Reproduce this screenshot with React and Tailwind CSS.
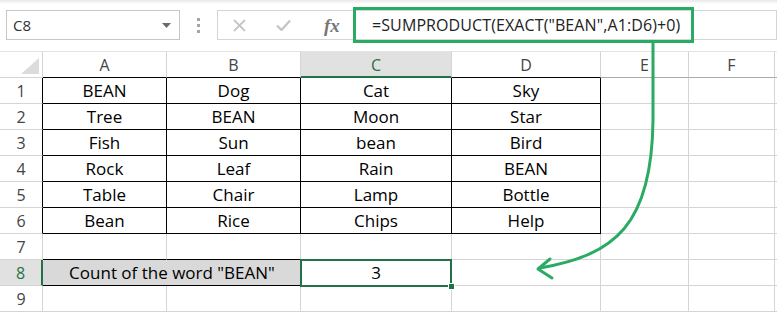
const rows = [
  ['BEAN', 'Dog', 'Cat', 'Sky'],
  ['Tree', 'BEAN', 'Moon', 'Star'],
  ['Fish', 'Sun', 'bean', 'Bird'],
  ['Rock', 'Leaf', 'Rain', 'BEAN'],
  ['Table', 'Chair', 'Lamp', 'Bottle'],
  ['Bean', 'Rice', 'Chips', 'Help'],
];

const cols = ['A', 'B', 'C', 'D', 'E', 'F'];

function RowHead({ n, active, dark }) {
  let cls = 'flex items-center justify-center border-b border-[#d4d4d4] text-[16px] ';
  if (active) cls += 'bg-[#e1e1e1] text-[#217346] border-r-2 border-r-[#217346]';
  else if (dark) cls += 'bg-white text-[#444] border-r border-r-black';
  else cls += 'bg-white text-[#444] border-r border-r-[#d4d4d4]';
  return <div className={cls}>{n}</div>;
}

function Toolbar() {
  return (
    <div className="h-[51px] relative">
      <div className="h-[4px] bg-gradient-to-b from-[#e8e8e8] to-white" />
      <div className="flex items-start pt-[6px]">
        {/* name box */}
        <div className="ml-[6px] w-[174px] h-[30px] border border-[#c6c6c6] flex items-center justify-between pl-[6px] pr-[8px]">
          <span className="text-[15px] text-[#333]">C8</span>
          <svg width="9" height="5" viewBox="0 0 9 5"><polygon points="0,0 9,0 4.5,5" fill="#6b6b6b" /></svg>
        </div>
        {/* grip dots */}
        <div className="w-[37px] h-[30px] flex flex-col items-center justify-center gap-[3px]">
          <div className="w-[3px] h-[3px] bg-[#a6a6a6]" />
          <div className="w-[3px] h-[3px] bg-[#a6a6a6]" />
          <div className="w-[3px] h-[3px] bg-[#a6a6a6]" />
        </div>
        {/* buttons */}
        <div className="w-[136px] h-[30px] border border-r-0 border-[#d4d4d4] flex items-center">
          <svg className="ml-[15px]" width="13" height="13" viewBox="0 0 13 13">
            <path d="M1 1 L12 12 M12 1 L1 12" stroke="#c6c6c6" strokeWidth="1.8" />
          </svg>
          <svg className="ml-[30px]" width="15" height="12" viewBox="0 0 15 12">
            <path d="M1 6.5 L5.5 11 L14 1.5" stroke="#c6c6c6" strokeWidth="2.4" fill="none" />
          </svg>
          <span className="ml-[33px] font-['Liberation_Serif',serif] italic font-bold text-[19px] text-[#777] leading-none">fx</span>
        </div>
        {/* formula input */}
        <div className="flex-1 h-[30px] border border-[#d4d4d4] flex items-center pl-[18px] text-[16px] tracking-[0.1px] text-[#222]">
          =SUMPRODUCT(EXACT(&quot;BEAN&quot;,A1:D6)+0)
        </div>
      </div>
    </div>
  );
}

export default function App() {
  return (
    <div className="w-[777px] h-[312px] bg-white relative overflow-hidden font-['Open_Sans',sans-serif]">
      <Toolbar />
      <div className="grid grid-cols-[43px_124px_134px_151px_149px_88px_86px_1fr] grid-rows-[27px] auto-rows-[26px] leading-[26px]">
        {/* header row */}
        <div className="border-r border-b border-[#d4d4d4] border-t border-t-[#e4e4e4] relative">
          <svg className="absolute right-[3px] bottom-[3px]" width="18" height="16" viewBox="0 0 18 16">
            <polygon points="18,0 18,16 0,16" fill="#dcdcdc" />
          </svg>
        </div>
        {cols.map((c) => {
          let cls = 'text-center text-[16px] border-r border-r-[#d4d4d4] border-t border-t-[#e4e4e4] ';
          if (c === 'C') cls += 'bg-[#e1e1e1] text-[#217346] border-b-2 border-b-[#217346]';
          else if (c === 'E' || c === 'F') cls += 'text-[#444] border-b border-b-[#ababab]';
          else cls += 'text-[#444] border-b border-b-black';
          return <div key={c} className={cls}>{c}</div>;
        })}
        <div className="border-b border-[#ababab] border-t border-t-[#e4e4e4]" />

        {/* rows 1-6 */}
        {rows.map((r, i) => [
          <RowHead key={'h' + i} n={i + 1} dark />,
          ...r.map((v, j) => (
            <div key={i + '-' + j} className="text-center text-[17px] text-black border-r border-b border-black">
              {v}
            </div>
          )),
          <div key={'e' + i} className="border-r border-b border-[#d4d4d4]" />,
          <div key={'f' + i} className="border-r border-b border-[#d4d4d4]" />,
          <div key={'g' + i} className="border-b border-[#d4d4d4]" />,
        ])}

        {/* row 7 */}
        <RowHead n={7} />
        <div className="border-r border-r-[#d4d4d4] border-b border-b-black" />
        <div className="border-r border-r-[#d4d4d4] border-b border-b-black" />
        <div className="border-r border-b border-[#d4d4d4]" />
        <div className="border-r border-b border-[#d4d4d4]" />
        <div className="border-r border-b border-[#d4d4d4]" />
        <div className="border-r border-b border-[#d4d4d4]" />
        <div className="border-b border-[#d4d4d4]" />

        {/* row 8 */}
        <RowHead n={8} active />
        <div className="col-span-2 bg-[#d9d9d9] text-center text-[17px] text-black border-b border-black">
          Count of the word &quot;BEAN&quot;
        </div>
        <div className="relative text-center text-[17px] text-black border-r border-b border-[#d4d4d4]">
          3
          <div className="absolute -left-[1px] -top-[1px] w-[152px] h-[28px] border-2 border-[#217346]" />
          <div className="absolute left-[147px] top-[23px] w-[7px] h-[7px] bg-[#217346] border border-white" />
        </div>
        <div className="border-r border-b border-[#d4d4d4]" />
        <div className="border-r border-b border-[#d4d4d4]" />
        <div className="border-r border-b border-[#d4d4d4]" />
        <div className="border-b border-[#d4d4d4]" />

        {/* row 9 */}
        <RowHead n={9} />
        <div className="border-r border-b border-[#d4d4d4]" />
        <div className="border-r border-b border-[#d4d4d4]" />
        <div className="border-r border-b border-[#d4d4d4]" />
        <div className="border-r border-b border-[#d4d4d4]" />
        <div className="border-r border-b border-[#d4d4d4]" />
        <div className="border-r border-b border-[#d4d4d4]" />
        <div className="border-b border-[#d4d4d4]" />
      </div>

      {/* annotation overlay */}
      <svg className="absolute left-0 top-0 pointer-events-none" width="777" height="312" viewBox="0 0 777 312">
        <rect x="354.5" y="8.5" width="338" height="33" fill="none" stroke="#29ab64" strokeWidth="3" />
        <path d="M653 43 L653 120 C652 225 615 255 540 268" fill="none" stroke="#29ab64" strokeWidth="3" />
        <path d="M550 259 L538 269 L552 278" fill="none" stroke="#29ab64" strokeWidth="3" strokeLinecap="round" strokeLinejoin="round" />
      </svg>
    </div>
  );
}
